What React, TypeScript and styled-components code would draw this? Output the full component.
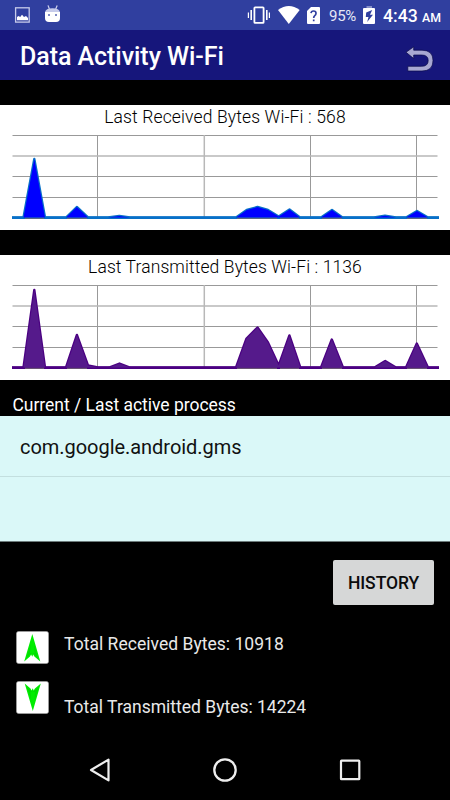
import React from "react";
import styled, { createGlobalStyle } from "styled-components";

const GlobalStyle = createGlobalStyle`
  * { box-sizing: border-box; }
  body { margin: 0; background: #000; font-family: Roboto, sans-serif; }
  svg { display: block; flex: none; }
`;

const Screen = styled.div`
  width: 450px;
  height: 800px;
  background: #000;
  display: flex;
  flex-direction: column;
  overflow: hidden;
`;

const StatusBar = styled.div`
  height: 30px;
  background: #303f9f;
  display: flex;
  justify-content: space-between;
  color: #fff;
  white-space: nowrap;
`;

const StatusGroup = styled.div`
  display: flex;
`;

const BatteryLevel = styled.span`
  width: 33px;
  font-size: 15px;
  line-height: 32px;
  color: #e6e8f5;
  letter-spacing: -0.3px;
`;

const Clock = styled.span`
  width: 67px;
  font-size: 17.6px;
  font-weight: 500;
  line-height: 32px;
  letter-spacing: 0;
`;

const Meridiem = styled.span`
  font-size: 12.3px;
  letter-spacing: 0;
`;

const TitleBar = styled.header`
  height: 50px;
  margin-bottom: 25px;
  padding-left: 20px;
  background: #16167b;
  color: #fff;
  display: flex;
  justify-content: space-between;
`;

const Title = styled.h1`
  margin: 0;
  font-size: 25px;
  font-weight: 500;
  line-height: 53px;
  letter-spacing: -0.05px;
`;

const ChartPanel = styled.section`
  height: 125px;
  margin-bottom: 25px;
  background: #fff;
  display: grid;

  & > * { grid-area: 1 / 1; }
`;

const ChartTitle = styled.h2<{ $spacing: number }>`
  margin: 0;
  color: #000;
  font-size: 17.5px;
  font-weight: 300;
  line-height: 24px;
  text-align: center;
  letter-spacing: ${(p) => p.$spacing}px;
`;

const SectionLabel = styled.div`
  height: 36px;
  margin-top: -25px;
  padding: 15px 0 0 12.4px;
  color: #fff;
  font-size: 17.5px;
  line-height: 21px;
  letter-spacing: -0.02px;
`;

const ProcessList = styled.div`
  height: 126px;
  background: #daf8f8;
  border-bottom: 1px solid #6d7c7c;
`;

const ProcessRow = styled.div`
  height: 61px;
  padding-left: 20px;
  border-bottom: 1px solid #c3dfdf;
  color: #111;
  font-size: 20px;
  line-height: 62px;
  letter-spacing: -0.04px;
`;

const Actions = styled.div`
  height: 89px;
  padding: 18px 16px 0 0;
  display: flex;
  justify-content: flex-end;
  align-items: flex-start;
`;

const HistoryButton = styled.button`
  width: 101px;
  height: 45px;
  padding: 1px 0 0;
  border: 0;
  border-radius: 2px;
  background: #d6d7d7;
  color: #0c0c0c;
  font: 500 17.5px Roboto, sans-serif;
  letter-spacing: -0.08px;
`;

const Totals = styled.div`
  height: 109px;
  padding-left: 16px;
  display: flex;
  flex-direction: column;
  gap: 17px;
`;

const TotalRow = styled.div`
  height: 33px;
  display: flex;
  gap: 15px;
`;

const TotalText = styled.span<{ $top: number; $spacing: number }>`
  padding-top: ${(p) => p.$top}px;
  color: #e9e9e9;
  font-size: 17.5px;
  line-height: 21px;
  letter-spacing: ${(p) => p.$spacing}px;
`;

const NavBar = styled.nav`
  height: 60px;
  display: flex;
  justify-content: space-between;
  padding: 0 75px;
`;

type Point = [number, number];

const received: Point[] = [
  [12, 112.5], [23.5, 112.5], [34.3, 54], [45, 112.5], [66, 112.5], [76.8, 102],
  [88, 112.5], [108, 112.5], [119.3, 111], [130, 112.5], [236, 112.5],
  [246.7, 105], [257.5, 102], [268, 105], [278.7, 111.5], [289.5, 104.5],
  [300, 112.5], [321, 112.5], [332, 105], [342.5, 112.5], [374, 112.5],
  [385, 110.7], [396, 112.5], [406, 112.5], [417, 106], [428, 112.5], [439, 112.5],
];

const transmitted: Point[] = [
  [12, 112.5], [23.5, 112.5], [34.3, 35], [45, 112.5], [66, 112.5], [76.9, 80],
  [88, 110.5], [98, 112.5], [109, 112.5], [119.5, 108.5], [130, 112.5], [236, 112.5],
  [246.5, 83.5], [257.5, 72.5], [268, 87.5], [278.7, 110.5], [289.4, 80.5],
  [300.3, 112.5], [321, 112.5], [331.8, 84.5], [343, 112.5], [374.5, 112.5],
  [385.2, 106], [396, 112.5], [406, 112.5], [416.8, 88.5], [428, 112.5], [439, 112.5],
];

const peakBases = "M25 113.3H44M67 113.3H87M237 113.3H277M280 113.3H299M322 113.3H342M407 113.3H427";

interface ChartProps {
  title: string;
  spacing: number;
  points: Point[];
  fill: string;
  stroke: string;
}

function Chart({ title, spacing, points, fill, stroke }: ChartProps) {
  const line = points.map((p) => p.join(",")).join(" ");
  return (
    <ChartPanel>
      <svg width="450" height="125" fill="none">
        <g stroke="#999" strokeWidth="1">
          <path d="M12.5 30.5H437.5M12.5 71.5H437.5M12.5 92.5H437.5M97.5 30V112M310.5 30V112M416.5 30V112" />
          <path d="M12.5 51H437.5M204.3 30V112" strokeWidth="1.5" stroke="#b8b8b8" />
        </g>
        <path d="M12 112.7H439" stroke={stroke} strokeWidth="2.5" />
        <polyline points={line} stroke={stroke} strokeWidth="2.4" strokeLinejoin="round" />
        <polygon points={line} fill={fill} />
        <path d={peakBases} stroke="#706873" strokeWidth="1.2" opacity=".8" />
      </svg>
      <ChartTitle $spacing={spacing}>{title}</ChartTitle>
    </ChartPanel>
  );
}

const ArrowIcon = ({ down = false }: { down?: boolean }) => (
  <svg width="33" height="33" viewBox="0 0 33 33">
    <rect x=".5" y=".5" width="32" height="32" rx="2" fill="#fff" stroke="#aaa" strokeWidth=".6" />
    <g transform={down ? "translate(.5 33) scale(1 -1)" : undefined}>
      <path d="M16.3 3L24.3 30.4L18.4 25.5L17.2 23.6L16.3 25.8L15.1 23.6L14 25.5L8.2 30.4Z" fill="#00ed00" />
      <path d="M14.8 13L10 28L13.5 24L16 22L18.7 24L22.4 28L18 13L18.6 22H14Z" fill="#00c900" opacity=".45" />
    </g>
  </svg>
);

const NotificationIcons = () => (
  <svg width="70" height="30" fill="#fff">
    <rect x="15.6" y="7.8" width="13.6" height="14.3" fill="none" stroke="#c6cbea" strokeWidth="1.3" />
    <path d="M17 20.2V17L18.5 16L20.2 17L22 14.8L24 17L26 16L28 18V20.2Z" />
    <path d="M45 12.2Q45.7 8.2 52.5 8.2T60 12.2Z" fill="#c6cbea" />
    <path d="M45 12H60V18Q60 22 56 22H49Q45 22 45 18Z" />
    <path d="M48 5.4L49.4 9M57.2 5.4L55.7 9" stroke="#cdd1ed" strokeWidth="1.2" />
    <path d="M48 14h2v2h-2zM55 14h2v2h-2z" fill="#7f89c5" />
  </svg>
);

const SignalIcons = () => (
  <svg width="83" height="30" fill="#fff">
    <rect x="8.4" y="7.3" width="9.2" height="15.6" rx=".7" fill="none" stroke="#fff" strokeWidth="1.8" />
    <path d="M5.2 10V20M20.8 10V20" stroke="#fff" strokeWidth="1.6" />
    <path d="M2.4 12.5V18M23.4 12.5V18" stroke="#fff" strokeWidth="1.2" />
    <path d="M32 10Q42.8 1.8 53.7 10L42.8 24Z" />
    <path d="M65 7H73Q74 7 74 8V23Q74 24 73 24H62Q61 24 61 23V11Z" />
    <path d="M65 13.2Q65.3 11 67.5 11Q70 11 70 13.3Q70 14.8 68.8 15.6Q67.7 16.4 67.7 18M67.7 19.4V21.2" fill="none" stroke="#303f9f" strokeWidth="1.7" />
  </svg>
);

const BatteryIcon = () => (
  <svg width="21" height="30">
    <path d="M4.5 6H10V8H4.5Z" fill="#8790c9" />
    <rect x="1" y="8" width="12" height="16" rx="1" fill="#fff" />
    <path d="M10.2 10L4.2 12.5L3.8 17H6.5L5.2 22L11 14.8H8Z" fill="#303f9f" />
  </svg>
);

const BackArrow = () => (
  <svg width="50" height="50">
    <path d="M6 22.3L13.7 16.8V20.2H22Q33 20.2 33 30.5Q33 41 22 41H7.8V36.3H21.5Q28.2 36.3 28.2 30.5Q28.2 25 21.5 25H13.7V28.5Z" fill="#a8a8d2" stroke="#080848" strokeWidth=".7" />
  </svg>
);

export default function App() {
  return (
    <>
      <GlobalStyle />
      <Screen>
        <StatusBar>
          <NotificationIcons />
          <StatusGroup>
            <SignalIcons />
            <BatteryLevel>95%</BatteryLevel>
            <BatteryIcon />
            <Clock>4:43 <Meridiem>AM</Meridiem></Clock>
          </StatusGroup>
        </StatusBar>
        <TitleBar>
          <Title>Data Activity Wi-Fi</Title>
          <BackArrow />
        </TitleBar>
        <Chart title="Last Received Bytes Wi-Fi : 568" spacing={0.13} points={received} fill="#0000ff" stroke="#0870c8" />
        <Chart title="Last Transmitted Bytes Wi-Fi : 1136" spacing={0.1} points={transmitted} fill="#551a8b" stroke="#4b0082" />
        <SectionLabel>Current / Last active process</SectionLabel>
        <ProcessList>
          <ProcessRow>com.google.android.gms</ProcessRow>
        </ProcessList>
        <Actions><HistoryButton>HISTORY</HistoryButton></Actions>
        <Totals>
          <TotalRow><ArrowIcon /><TotalText $top={3} $spacing={0.03}>Total Received Bytes: 10918</TotalText></TotalRow>
          <TotalRow><ArrowIcon down /><TotalText $top={16} $spacing={0}>Total Transmitted Bytes: 14224</TotalText></TotalRow>
        </Totals>
        <NavBar>
          <svg width="50" height="60"><path d="M16 30L33.5 19.6V40.4Z" fill="none" stroke="#eee" strokeWidth="2.2" strokeLinejoin="round" /></svg>
          <svg width="50" height="60"><circle cx="25" cy="30" r="10.7" fill="none" stroke="#eee" strokeWidth="2.3" /></svg>
          <svg width="50" height="60"><rect x="16" y="20.7" width="18.3" height="18.5" rx=".5" fill="none" stroke="#eee" strokeWidth="2.2" /></svg>
        </NavBar>
      </Screen>
    </>
  );
}
